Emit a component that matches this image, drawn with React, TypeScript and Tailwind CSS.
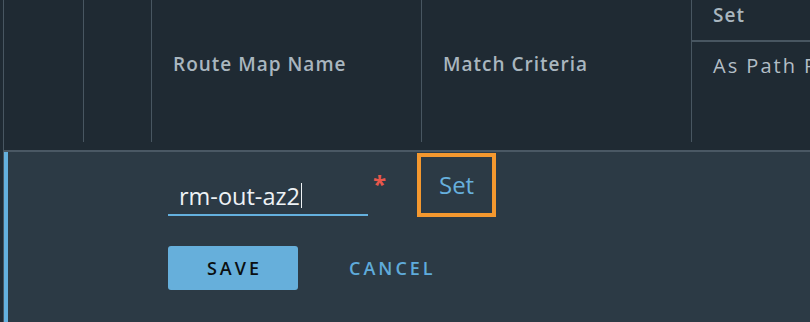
import React from "react";

export default function App() {
  const font = { fontFamily: '"Open Sans", "Noto Sans", sans-serif' };
  return (
    <div
      className="w-[810px] h-[322px] bg-[#1f2a33] overflow-hidden flex"
      style={font}
    >
      <div className="w-[3px] shrink-0" />
      <div className="w-[1px] shrink-0 bg-[#485661]" />
      <div className="flex-1 flex flex-col min-w-0">
        {/* header row */}
        <div className="h-[150px] flex items-start shrink-0">
          <div className="w-[79px] h-[142px] shrink-0" />
          <div className="w-[68px] h-[142px] shrink-0 border-l border-[#485661]" />
          <div className="w-[270px] h-[142px] shrink-0 border-l border-[#485661] flex items-center pl-[21px] pb-[14px]">
            <span className="text-[19px] font-semibold text-[#a9b6bf] tracking-[1px]">
              Route Map Name
            </span>
          </div>
          <div className="w-[270px] h-[142px] shrink-0 border-l border-[#485661] flex items-center pl-[21px] pb-[14px]">
            <span className="text-[19px] font-semibold text-[#a9b6bf] tracking-[1px]">
              Match Criteria
            </span>
          </div>
          <div className="flex-1 h-[142px] border-l border-[#485661] flex flex-col min-w-0">
            <div className="h-[42px] border-b-2 border-[#485661] pl-[21px] pt-[1px]">
              <span className="text-[19px] font-semibold text-[#a9b6bf] tracking-[1px] whitespace-nowrap">
                Set
              </span>
            </div>
            <div className="pl-[21px] pt-[9px] whitespace-nowrap overflow-hidden">
              <span className="text-[20px] text-[#b3bec6] tracking-[2px]">
                As Path Prepend
              </span>
            </div>
          </div>
        </div>
        {/* edit panel */}
        <div className="flex-1 bg-[#2c3a45] border-t-2 border-[#4a5864] flex">
          <div className="w-[4px] shrink-0 bg-[#64b0de]" />
          <div className="flex-1 flex flex-col pl-[160px]">
            <div className="flex items-start h-[94px]">
              <div className="w-[200px] mt-[24px] border-b-2 border-[#64b0de] pl-[11px] h-[40px] flex items-end pb-[6px]">
                <span className="text-[23.5px] text-[#eef2f5] leading-none">rm-out-az2</span>
                <span className="w-[1.5px] h-[25px] bg-[#eef2f5] ml-[1px]" />
              </div>
              <span className="ml-[5px] mt-[20px] text-[24px] leading-none text-[#e8574b] font-bold">
                *
              </span>
              <div className="ml-[31px] mt-[1px] w-[79px] h-[64px] border-[4px] border-[#f4982f] flex items-center justify-center">
                <span className="text-[24px] text-[#67b0dd] leading-none">Set</span>
              </div>
            </div>
            <div className="flex items-center">
              <div className="w-[130px] h-[44px] rounded-[3px] bg-[#66afdb] flex items-center justify-center">
                <span className="text-[18px] font-semibold tracking-[3px] text-[#0b0f12] pl-[3px]">
                  SAVE
                </span>
              </div>
              <span className="ml-[51px] text-[18px] font-semibold tracking-[3px] text-[#5fabdb]">
                CANCEL
              </span>
            </div>
          </div>
        </div>
      </div>
    </div>
  );
}
